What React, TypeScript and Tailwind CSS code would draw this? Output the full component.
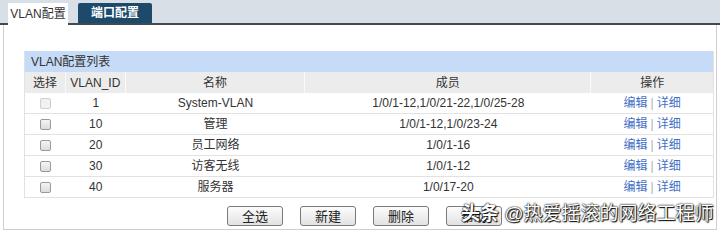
import React from "react";

const rows = [
  { id: "1", name: "System-VLAN", members: "1/0/1-12,1/0/21-22,1/0/25-28", locked: true },
  { id: "10", name: "管理", members: "1/0/1-12,1/0/23-24" },
  { id: "20", name: "员工网络", members: "1/0/1-16" },
  { id: "30", name: "访客无线", members: "1/0/1-12" },
  { id: "40", name: "服务器", members: "1/0/17-20" },
];

const cols = ["w-[41px]", "w-[60px]", "w-[180px]", "w-[287px]", "w-[122px]"];

function Check({ disabled }: { disabled?: boolean }) {
  return (
    <span
      className={
        "inline-block w-[11px] h-[11px] rounded-[2px] border " +
        (disabled
          ? "border-[#cfcfcf] bg-[#f1f1f1]"
          : "border-[#9a9a9a] bg-gradient-to-b from-[#f4f4f4] to-[#dcdcdc]")
      }
    />
  );
}

function Btn({ label }: { label: string }) {
  return (
    <button
      type="button"
      className="w-[56px] h-[20px] rounded-[3px] border border-[#7a7a7a] bg-gradient-to-b from-[#fdfdfd] to-[#e2e2e2] text-[13px] text-[#222] leading-none"
    >
      {label}
    </button>
  );
}

export default function App() {
  return (
    <div className="w-[720px] h-[232px] bg-white relative overflow-hidden text-[12px] text-[#333] font-['Liberation_Sans','Noto_Sans_CJK_SC',sans-serif]">
      {/* tab strip */}
      <div className="h-[25px] bg-[#d9dfe7] border-b-2 border-[#3e4953] flex items-end pl-[8px]">
        <div className="w-[60px] h-[22px] mb-[-2px] bg-white flex items-center justify-center text-[#333]">
          VLAN配置
        </div>
        <div className="ml-[10px] w-[74px] h-[20px] rounded-t-[2px] bg-[#1d4a6b] text-white flex items-center justify-center font-bold">
          端口配置
        </div>
      </div>

      <div className="mx-[3px] h-[205px] border-x border-b border-[#cfcfcf] pl-[20px] pt-[26px]">
        <div className="w-[690px] border-x border-[#e2e2e2]">
          <div className="h-[21px] bg-[#c6dbf7] flex items-center pl-[6px] text-[#333]">VLAN配置列表</div>
          <div className="h-[21px] bg-[#ececec] flex">
            {["选择", "VLAN_ID", "名称", "成员", "操作"].map((h, i) => (
              <div
                key={h}
                className={cols[i] + " flex items-center justify-center " + (i < 4 ? "border-r border-[#fafafa]" : "")}
              >
                {h}
              </div>
            ))}
          </div>
          {rows.map((r) => (
            <div key={r.id} className="h-[21px] flex border-b border-[#e2e2e2]">
              <div className={cols[0] + " flex items-center justify-center"}>
                <Check disabled={r.locked} />
              </div>
              <div className={cols[1] + " flex items-center justify-center"}>{r.id}</div>
              <div className={cols[2] + " flex items-center justify-center"}>{r.name}</div>
              <div className={cols[3] + " flex items-center justify-center"}>{r.members}</div>
              <div className={cols[4] + " flex items-center justify-center text-[#3f6fc6]"}>
                <span>编辑</span>
                <span className="mx-[3px] text-[#b0b0b0]">|</span>
                <span>详细</span>
              </div>
            </div>
          ))}
        </div>

        <div className="mt-[8px] ml-[203px] flex gap-[17px]">
          <Btn label="全选" />
          <Btn label="新建" />
          <Btn label="删除" />
          <Btn label="帮助" />
        </div>
      </div>

      {/* watermark over the page */}
      <div className="absolute left-[461px] top-[202px] text-[19px] leading-[24px] text-white whitespace-nowrap [text-shadow:0_0_1px_#000,0_0_2px_#222,1px_1px_1px_#000]">
        <span className="font-bold">头条</span> @热爱摇滚的网络工程师
      </div>
    </div>
  );
}
